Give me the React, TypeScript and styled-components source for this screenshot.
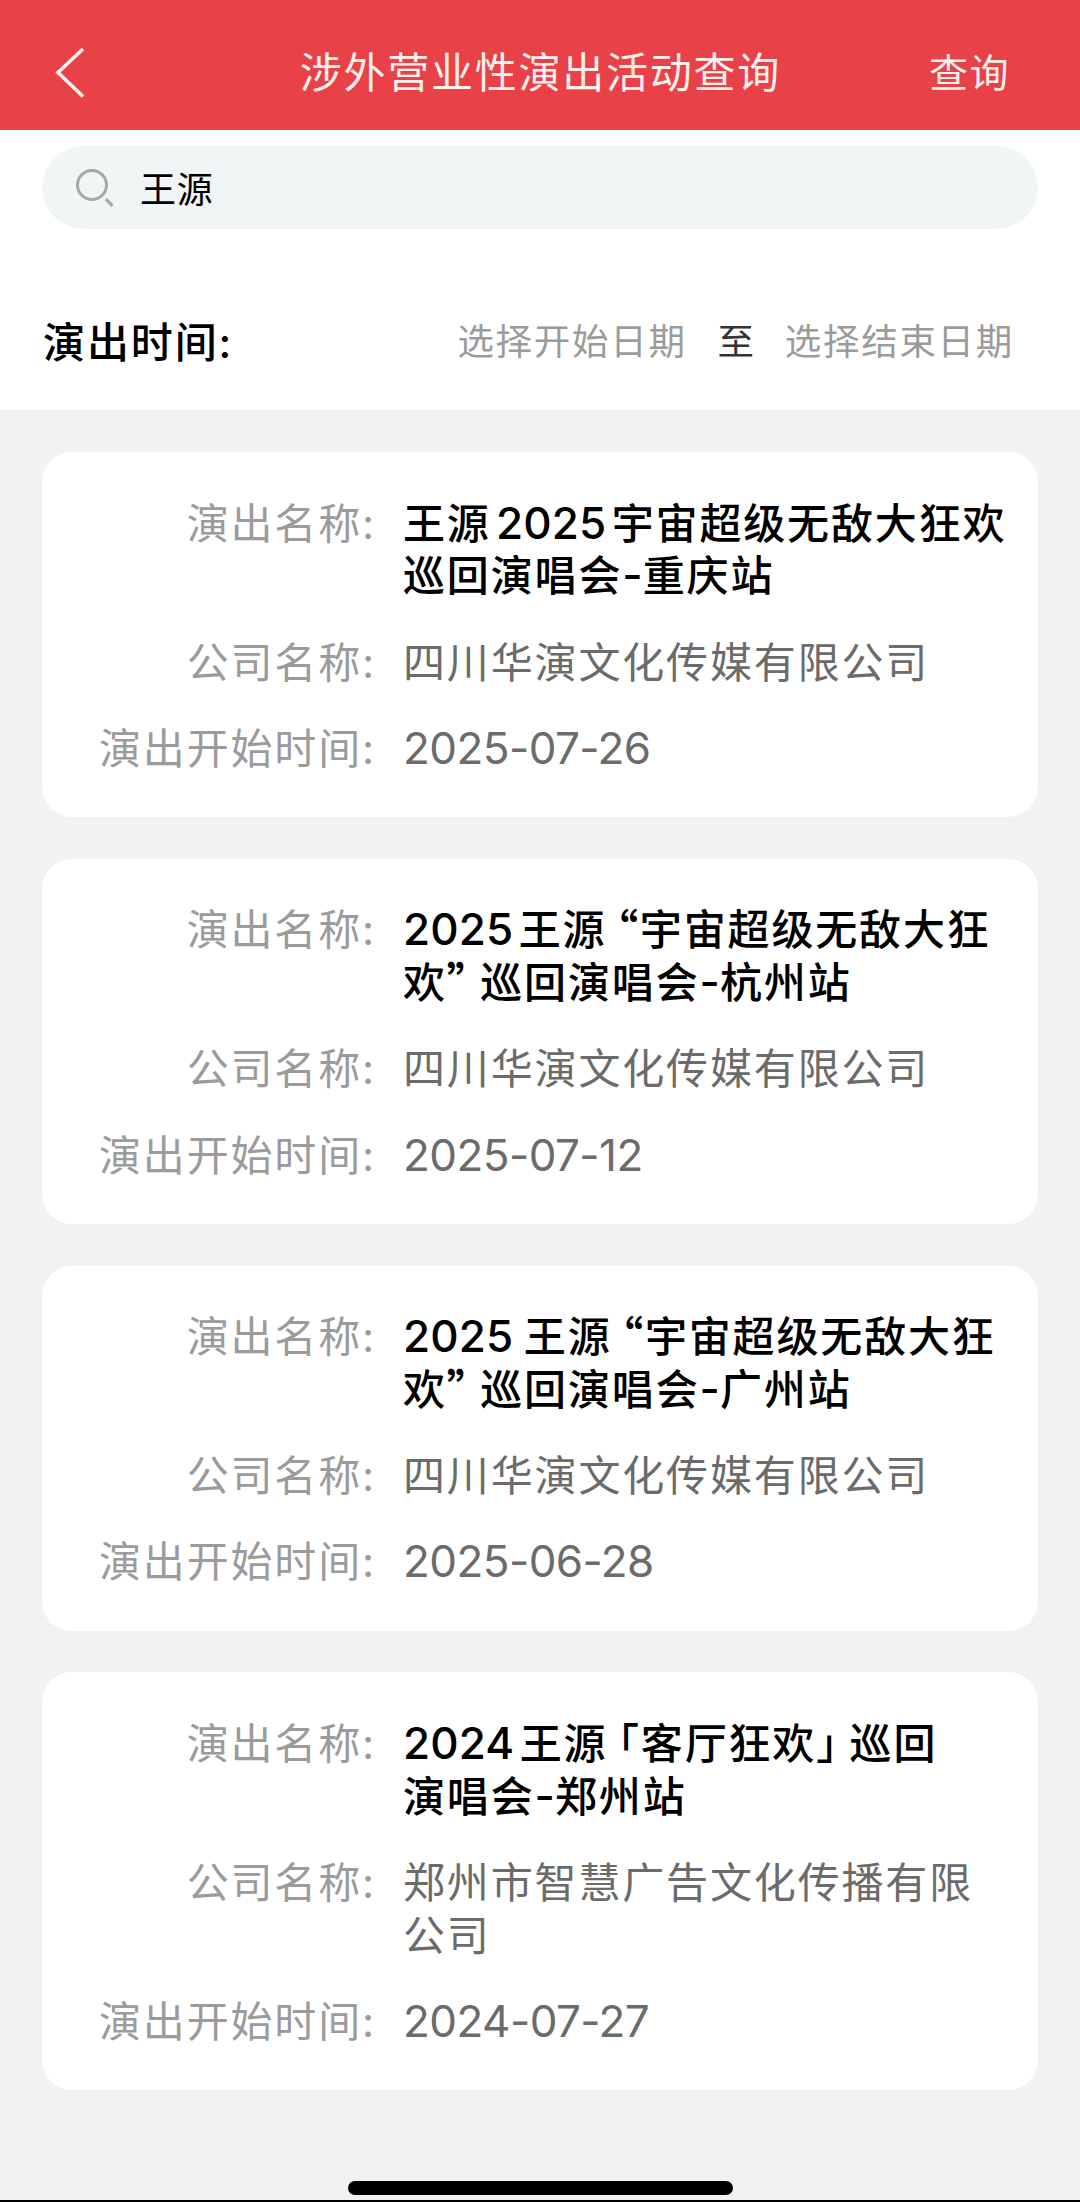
import React from "react";
import styled, { createGlobalStyle } from "styled-components";

const GlobalStyle = createGlobalStyle`
  * { box-sizing: border-box; }
  body {
    margin: 0;
    background: #f2f2f2;
    font-family: Inter, "Noto Sans CJK SC", sans-serif;
    -webkit-font-smoothing: antialiased;
  }
`;

const Page = styled.div`
  width: 1080px;
  height: 2202px;
  display: flex;
  flex-direction: column;
  background: #f2f2f2;
  border-bottom: 2px solid #000;
  overflow: hidden;
`;

const Header = styled.header`
  flex: none;
  height: 130px;
  padding: 15px 70px 0 54px;
  display: grid;
  grid-template-columns: 120px 1fr 103px;
  align-items: center;
  background: #e84148;
  color: #fff0ec;
`;

const BackButton = styled.button`
  display: flex;
  width: 34px;
  padding: 0;
  border: 0;
  background: none;
  color: inherit;
`;

const Title = styled.h1`
  margin: 0;
  text-align: center;
  font-size: 42px;
  line-height: 60px;
  font-weight: 400;
  letter-spacing: 1.75px;
  white-space: nowrap;
`;

const QueryButton = styled.button`
  padding: 0;
  border: 0;
  background: none;
  color: inherit;
  font-family: inherit;
  font-size: 39px;
  line-height: 60px;
  letter-spacing: 1.5px;
  text-align: right;
  white-space: nowrap;
`;

const Filters = styled.section`
  flex: none;
  height: 279.5px;
  padding: 16px 42px 0;
  background: #fff;
`;

const SearchBox = styled.div`
  height: 83px;
  display: flex;
  align-items: center;
  gap: 26px;
  padding-left: 33px;
  border-radius: 42px;
  background: #f0f5f6;
  font-size: 36px;
  letter-spacing: 0.7px;
  color: #000;
`;

const SearchText = styled.span`
  padding-bottom: 2px;
`;

const DateRow = styled.div`
  display: flex;
  align-items: center;
  justify-content: space-between;
  height: 60px;
  margin-top: 80px;
`;

const DateLabel = styled.span`
  padding-left: 1px;
  font-size: 42px;
  font-weight: 500;
  letter-spacing: 1.9px;
  color: #000;
`;

const DateRange = styled.div`
  display: flex;
  align-items: center;
  gap: 31px;
  padding-right: 24px;
  font-size: 36.5px;
  letter-spacing: 1.7px;
  color: #9b9b9b;
`;

const RangeWord = styled.span`
  margin-right: -2px;
  color: #333;
`;

const Results = styled.main`
  flex: 1;
  display: flex;
  flex-direction: column;
  gap: 41.8px;
  padding: 42.5px 42px 0;
`;

const Card = styled.article`
  display: flex;
  flex-direction: column;
  gap: 33.5px;
  padding: 45.5px 0 41.5px;
  border-radius: 30px;
  background: #fff;
`;

const Row = styled.div`
  display: grid;
  grid-template-columns: 334px 1fr;
  column-gap: 27px;
  font-size: 42px;
  line-height: 52.75px;
  letter-spacing: 1.85px;
`;

const Label = styled.span`
  text-align: right;
  color: #9b9b9b;
  white-space: nowrap;
`;

const Value = styled.span<{ $strong?: boolean }>`
  color: ${(p) => (p.$strong ? "#000" : "#6b6b6b")};
  font-weight: ${(p) => (p.$strong ? 500 : 400)};
  text-autospace: ${(p) => (p.$strong ? "normal" : "no-autospace")};
  font-feature-settings: "halt";
  word-spacing: -2.5px;
`;

const Line = styled.span`
  display: block;
  height: 52.75px;
  white-space: nowrap;
`;

const Latin = styled.span<{ $strong?: boolean }>`
  font-size: 44px;
  line-height: 1;
  letter-spacing: ${(p) => (p.$strong ? "0.1px" : "-0.55px")};
`;

const Quote = styled.span`
  font-family: "Noto Sans CJK SC", sans-serif;
  font-weight: 700;
  line-height: 0.9;
`;

const HomeBar = styled.div`
  flex: none;
  align-self: center;
  width: 385px;
  height: 14px;
  margin-bottom: 5px;
  border-radius: 7px;
  background: #000;
`;

interface Show {
  name: string[];
  company: string[];
  start: string;
}

const shows: Show[] = [
  {
    name: ["王源2025宇宙超级无敌大狂欢", "巡回演唱会-重庆站"],
    company: ["四川华演文化传媒有限公司"],
    start: "2025-07-26",
  },
  {
    name: ["2025王源 “宇宙超级无敌大狂", "欢” 巡回演唱会-杭州站"],
    company: ["四川华演文化传媒有限公司"],
    start: "2025-07-12",
  },
  {
    name: ["2025 王源 “宇宙超级无敌大狂", "欢” 巡回演唱会-广州站"],
    company: ["四川华演文化传媒有限公司"],
    start: "2025-06-28",
  },
  {
    name: ["2024王源 「客厅狂欢」 巡回", "演唱会-郑州站"],
    company: ["郑州市智慧广告文化传播有限", "公司"],
    start: "2024-07-27",
  },
];

/* Digits and hyphens are set slightly larger than the Chinese text; quotes use the Chinese face. */
function MixedText({ text, strong }: { text: string; strong?: boolean }) {
  return (
    <>
      {text.split(/([\d-]+|[“”])/).map((part, i) => {
        if (/^[\d-]+$/.test(part)) {
          return (
            <Latin key={i} $strong={strong}>
              {part}
            </Latin>
          );
        }
        if (/^[“”]$/.test(part)) return <Quote key={i}>{part}</Quote>;
        return part;
      })}
    </>
  );
}

function Field({ label, lines, strong }: { label: string; lines: string[]; strong?: boolean }) {
  return (
    <Row>
      <Label>{label}:</Label>
      <Value $strong={strong}>
        {lines.map((line) => (
          <Line key={line}>
            <MixedText text={line} strong={strong} />
          </Line>
        ))}
      </Value>
    </Row>
  );
}

export default function App() {
  return (
    <>
      <GlobalStyle />
      <Page lang="zh-CN">
        <Header>
          <BackButton aria-label="返回">
            <svg width="34" height="52" viewBox="0 0 34 52" fill="none">
              <path d="M29 2 L4 25.5 L29 49.5" stroke="currentColor" strokeWidth="3.6" />
            </svg>
          </BackButton>
          <Title>涉外营业性演出活动查询</Title>
          <QueryButton>查询</QueryButton>
        </Header>
        <Filters>
          <SearchBox>
            <svg width="39" height="40" viewBox="0 0 39 40" fill="none" stroke="#a3a8a8">
              <circle cx="17" cy="17" r="14.5" strokeWidth="3" />
              <path d="M31 31 L37.5 38" strokeWidth="3.2" />
            </svg>
            <SearchText>王源</SearchText>
          </SearchBox>
          <DateRow>
            <DateLabel>演出时间:</DateLabel>
            <DateRange>
              <span>选择开始日期</span>
              <RangeWord>至</RangeWord>
              <span>选择结束日期</span>
            </DateRange>
          </DateRow>
        </Filters>
        <Results>
          {shows.map((show) => (
            <Card key={show.start}>
              <Field label="演出名称" lines={show.name} strong />
              <Field label="公司名称" lines={show.company} />
              <Field label="演出开始时间" lines={[show.start]} />
            </Card>
          ))}
        </Results>
        <HomeBar />
      </Page>
    </>
  );
}
